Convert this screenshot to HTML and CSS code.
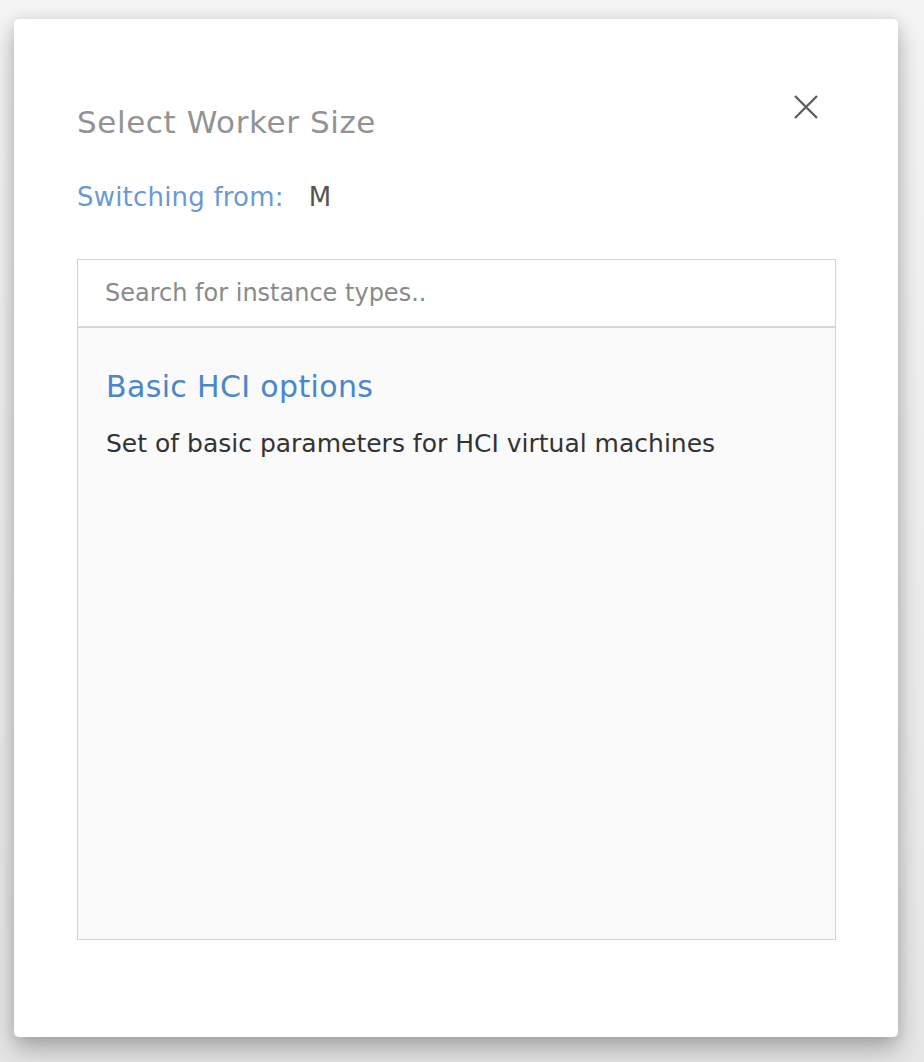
FILE: index.html
```html
<!DOCTYPE html>
<html>
<head>
<meta charset="utf-8">
<link rel="stylesheet" href="styles.css">
</head>
<body>
<div class="backdrop">
  <div class="modal">
    <div class="header">
      <h2 class="title">Select Worker Size</h2>
      <button class="close" aria-label="Close">
        <svg width="26" height="26" viewBox="0 0 26 26"><path d="M2 2 L24 24 M24 2 L2 24" stroke="#5f5f5f" stroke-width="2.4" fill="none"/></svg>
      </button>
    </div>
    <div class="switching"><span class="label">Switching from:</span><span class="value">M</span></div>
    <div class="picker">
      <div class="search">Search for instance types..</div>
      <div class="list">
        <div class="group-title">Basic HCI options</div>
        <div class="group-desc">Set of basic parameters for HCI virtual machines</div>
      </div>
    </div>
  </div>
</div>
</body>
</html>
```

FILE: styles.css
```css
html, body {
  margin: 0;
  padding: 0;
}
body {
  width: 924px;
  height: 1062px;
  overflow: hidden;
  background: linear-gradient(#f4f4f4, #e6e6e6);
  font-family: "DejaVu Sans", "Liberation Sans", sans-serif;
}
.backdrop {
  padding: 19px 26px 0 14px;
}
.modal {
  width: 884px;
  height: 1018px;
  box-sizing: border-box;
  background: #fff;
  border-radius: 5px;
  box-shadow: 0 12px 24px rgba(0,0,0,0.28), 0 0 14px rgba(0,0,0,0.08);
  padding: 86px 63px 0 63px;
}
.header {
  display: flex;
  justify-content: space-between;
  align-items: flex-start;
}
.title {
  margin: 0;
  font-weight: 400;
  font-size: 31px;
  line-height: 34px;
  color: #939393;
  letter-spacing: 0.6px;
}
.close {
  border: 0;
  background: none;
  padding: 0;
  margin: -11px 16px 0 0;
  width: 26px;
  height: 26px;
  cursor: pointer;
}
.close svg { display: block; }
.switching {
  margin-top: 44px;
  font-size: 26px;
  line-height: 28px;
  letter-spacing: 0.2px;
  display: flex;
  gap: 25px;
}
.switching .label { color: #6a9ad6; }
.switching .value { color: #555; }
.picker {
  margin-top: 48px;
  border: 1px solid #d4d4d4;
  width: 759px;
  box-sizing: border-box;
}
.search {
  height: 68px;
  box-sizing: border-box;
  padding: 19px 27px 0;
  font-size: 24px;
  line-height: 28px;
  color: #8a8a8a;
  background: #fff;
  border-bottom: 2px solid #d6d6d6;
}
.list {
  background: #fafafa;
  height: 611px;
  box-sizing: border-box;
  padding: 42px 28px 0;
}
.group-title {
  font-size: 30px;
  line-height: 34px;
  letter-spacing: 0.35px;
  color: #4a87c9;
}
.group-desc {
  margin-top: 26px;
  font-size: 25px;
  line-height: 28px;
  color: #333;
}
```
